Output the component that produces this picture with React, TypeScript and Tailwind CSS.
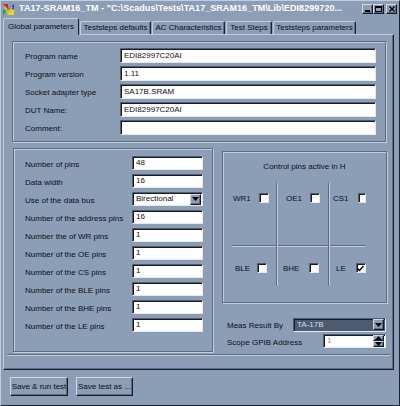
import React from 'react';

function Sunken({ className = '', children }: { className?: string; children?: React.ReactNode }) {
  return (
    <div
      className={
        'border border-t-[#4f5c72] border-l-[#4f5c72] border-b-[#e4e9f0] border-r-[#e4e9f0] shadow-[inset_1px_1px_0_#161c25] ' +
        className
      }
    >
      {children}
    </div>
  );
}

function Raised({ className = '', children }: { className?: string; children?: React.ReactNode }) {
  return (
    <div
      className={
        'bg-[#8c9db6] border border-t-[#d0d8e4] border-l-[#d0d8e4] border-b-[#161c25] border-r-[#161c25] shadow-[inset_-1px_-1px_0_#5e6c84] flex items-center justify-center ' +
        className
      }
    >
      {children}
    </div>
  );
}

function Down() {
  return (
    <svg width="7" height="4" viewBox="0 0 7 4">
      <path d="M0 0h7L3.5 4z" fill="#000" />
    </svg>
  );
}

function Up() {
  return (
    <svg width="7" height="4" viewBox="0 0 7 4">
      <path d="M0 4h7L3.5 0z" fill="#000" />
    </svg>
  );
}

function TextBox({ value, w }: { value: string; w: string }) {
  return (
    <Sunken className={'bg-white h-[15px] flex items-center pl-[3px] ' + w}>
      <span className="leading-none">{value}</span>
    </Sunken>
  );
}

function Check({ on = false }: { on?: boolean }) {
  return (
    <Sunken className="bg-white w-[10px] h-[10px] flex items-center justify-center">
      {on && (
        <svg width="7" height="7" viewBox="0 0 7 7">
          <path d="M0.5 3.5l2 2 4-4.5" stroke="#000" strokeWidth="1.4" fill="none" />
        </svg>
      )}
    </Sunken>
  );
}

const globalRows = [
  ['Program name', 'EDI82997C20AI'],
  ['Program version', '1.11'],
  ['Socket adapter type', 'SA17B.SRAM'],
  ['DUT Name:', 'EDI82997C20AI'],
  ['Comment:', ''],
];

const pinRows = [
  ['Number of pins', '48'],
  ['Data width', '16'],
  ['Use of the data bus', 'combo'],
  ['Number of the address pins', '16'],
  ['Number the of WR pins', '1'],
  ['Number of the OE pins', '1'],
  ['Number of the CS pins', '1'],
  ['Number of the BLE pins', '1'],
  ['Number of the BHE pins', '1'],
  ['Number of the LE pins', '1'],
];

const tabs = [
  ['Teststeps defaults', 'w-[71px]'],
  ['AC Characteristics', 'w-[73px]'],
  ['Test Steps', 'w-[46px]'],
  ['Teststeps parameters', 'w-[83px]'],
];

export default function App() {
  return (
    <div className="w-[400px] h-[406px] bg-[#8c9db6] border border-t-[#c3ccda] border-l-[#c3ccda] border-r-[#1c232e] border-b-[#1c232e] flex flex-col overflow-hidden font-['Liberation_Sans',Arial,sans-serif] text-[8px] text-[#0b0f16]">
      {/* title bar */}
      <div className="h-[16px] flex items-center pl-[1px] pr-[2px] shrink-0">
        <svg width="13" height="13" viewBox="0 0 13 13">
          <path d="M1 1h5l0.5 5.5z" fill="#d8202a" />
          <path d="M12 1v5l-5.5 0.5z" fill="#2a48c8" />
          <path d="M1 12V7l5.5-0.5z" fill="#2aa838" />
          <path d="M6.5 6.5L12 7v5H7z" fill="#f0d020" />
          <path d="M3 4l3.5 7 3.5-7" stroke="#e8c818" strokeWidth="1.6" fill="none" />
        </svg>
        <span className="ml-[4px] font-bold text-[9px] text-white whitespace-nowrap tracking-[0.05px]">
          {'TA17-SRAM16_TM - "C:\\Scadus\\Tests\\TA17_SRAM16_TM\\Lib\\EDI8299720...'}
        </span>
        <div className="ml-auto flex items-center">
          <Raised className="w-[11px] h-[10px] items-end pb-[1px]">
            <div className="w-[5px] h-[2px] bg-black" />
          </Raised>
          <Raised className="w-[11px] h-[10px]">
            <div className="w-[7px] h-[6px] border border-black border-t-2" />
          </Raised>
          <Raised className="w-[11px] h-[10px] ml-[2px]">
            <svg width="6" height="6" viewBox="0 0 6 6">
              <path d="M0.5 0.5l5 5M5.5 0.5l-5 5" stroke="#000" strokeWidth="1.4" />
            </svg>
          </Raised>
        </div>
      </div>

      {/* tab strip */}
      <div className="h-[16px] flex items-end pl-[2px] shrink-0 mt-[1px]">
        <div className="relative z-10 -mb-px w-[76px] h-[17px] bg-[#8c9db6] border-t border-l border-t-[#c3ccda] border-l-[#c3ccda] border-r border-r-[#1c232e] rounded-t-[2px] flex items-center justify-center pb-[1px]">
          Global parameters
        </div>
        {tabs.map(([t, w]) => (
          <div
            key={t}
            className={
              'h-[13px] ml-[1px] border-t border-l border-t-[#c3ccda] border-l-[#c3ccda] border-r border-r-[#1c232e] shadow-[inset_-1px_0_0_#5e6c84] rounded-t-[2px] flex items-center justify-center ' +
              w
            }
          >
            {t}
          </div>
        ))}
      </div>

      {/* tab page */}
      <div className="ml-[2px] w-[391px] h-[336px] shrink-0 border border-t-[#c3ccda] border-l-[#c3ccda] border-r-[#1c232e] border-b-[#1c232e] shadow-[inset_-1px_-1px_0_#5e6c84] flex flex-col">
        <div className="ml-[8px] mt-[6px] w-[374px] h-[101px] border border-[#5e6c84] shadow-[1px_1px_0_#c3ccda,inset_1px_1px_0_#c3ccda] pt-[6px] pl-[12px] flex flex-col gap-[3px]">
          {globalRows.map(([l, v]) => (
            <div key={l} className="flex items-center h-[15px]">
              <span className="w-[95px] pt-[3px]">{l}</span>
              <TextBox value={v} w="w-[256px]" />
            </div>
          ))}
        </div>

        <div className="flex mt-[6px]">
          <div className="ml-[9px] w-[200px] h-[204px] border border-[#5e6c84] shadow-[1px_1px_0_#c3ccda,inset_1px_1px_0_#c3ccda] pt-[7px] pl-[11px] flex flex-col gap-[4px]">
            {pinRows.map(([l, v]) => (
              <div key={l} className="flex items-center h-[14px]">
                <span className="w-[107px] pt-[3px] whitespace-nowrap">{l}</span>
                {v === 'combo' ? (
                  <Sunken className="bg-white w-[71px] h-[14px] flex items-center pl-[3px] pr-px">
                    <span className="flex-1">Birectional</span>
                    <Raised className="w-[11px] h-[11px]">
                      <Down />
                    </Raised>
                  </Sunken>
                ) : (
                  <Sunken className="bg-white w-[71px] h-[14px] flex items-center pl-[3px]">
                    <span>{v}</span>
                  </Sunken>
                )}
              </div>
            ))}
          </div>

          <div className="ml-[9px] flex flex-col">
            <div className="mt-[3px] w-[165px] h-[152px] border border-[#5e6c84] shadow-[1px_1px_0_#c3ccda,inset_1px_1px_0_#c3ccda] flex flex-col">
              <div className="text-center pt-[9px] h-[31px]">Control pins active in H</div>
              <div className="flex h-[103px]">
                <div className="w-[53px] flex flex-col">
                  <div className="ml-[9px] h-[63px] border-b border-b-[#5e6c84] shadow-[0_1px_0_#c3ccda] flex items-start pt-[10px] pl-[1px] gap-[8px]">
                    <span>WR1</span>
                    <Check />
                  </div>
                  <div className="flex items-start pt-[17px] pl-[12px] gap-[7px]">
                    <span>BLE</span>
                    <Check />
                  </div>
                </div>
                <div className="w-[2px] border-l border-l-[#5e6c84] border-r border-r-[#c3ccda]" />
                <div className="w-[50px] flex flex-col">
                  <div className="h-[63px] border-b border-b-[#5e6c84] shadow-[0_1px_0_#c3ccda] flex items-start pt-[10px] pl-[8px] gap-[8px]">
                    <span>OE1</span>
                    <Check />
                  </div>
                  <div className="flex items-start pt-[17px] pl-[5px] gap-[10px]">
                    <span>BHE</span>
                    <Check />
                  </div>
                </div>
                <div className="w-[2px] border-l border-l-[#5e6c84] border-r border-r-[#c3ccda]" />
                <div className="w-[56px] flex flex-col">
                  <div className="mr-[20px] h-[63px] border-b border-b-[#5e6c84] shadow-[0_1px_0_#c3ccda] flex items-start pt-[10px] pl-[3px] gap-[9px]">
                    <span>CS1</span>
                    <Check />
                  </div>
                  <div className="flex items-start pt-[17px] pl-[6px] gap-[10px]">
                    <span>LE</span>
                    <Check on />
                  </div>
                </div>
              </div>
            </div>

            <div className="flex items-center mt-[15px] h-[13px]">
              <span className="pl-[5px] w-[71px] pt-[3px]">Meas Result By</span>
              <Sunken className="bg-[#4d5b71] w-[93px] h-[14px] flex items-center pl-[3px] pr-px">
                <span className="flex-1 text-[#d4dbe6]">TA-17B</span>
                <Raised className="w-[11px] h-[11px]">
                  <Down />
                </Raised>
              </Sunken>
            </div>
            <div className="flex items-center mt-[3px] h-[14px]">
              <span className="pl-[5px] w-[101px] pt-[3px] whitespace-nowrap">Scope GPIB Address</span>
              <Sunken className="bg-white w-[63px] h-[14px] flex items-center pl-[3px] pr-px">
                <span className="flex-1 text-[#8a96a8]">1</span>
                <div className="flex flex-col">
                  <Raised className="w-[11px] h-[6px]">
                    <Up />
                  </Raised>
                  <Raised className="w-[11px] h-[6px]">
                    <Down />
                  </Raised>
                </div>
              </Sunken>
            </div>
          </div>
        </div>

        <div className="mx-[3px] mt-[2px] h-[2px] border-t border-t-[#5e6c84] border-b border-b-[#c3ccda]" />
      </div>

      {/* bottom buttons */}
      <div className="flex items-start pt-[7px] pl-[9px] gap-[8px]">
        <Raised className="w-[58px] h-[19px]">Save &amp; run test</Raised>
        <Raised className="w-[57px] h-[19px]">Save test as ...</Raised>
      </div>
    </div>
  );
}
